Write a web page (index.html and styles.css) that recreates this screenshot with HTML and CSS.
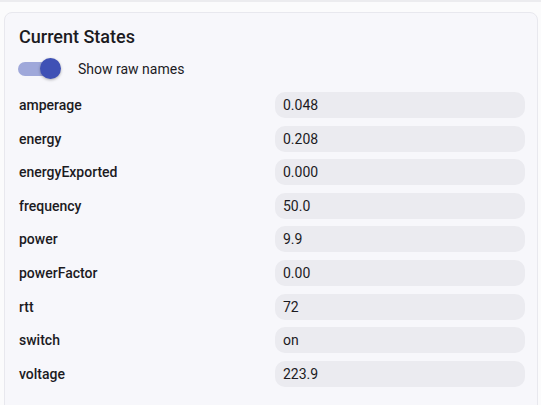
FILE: index.html
```html
<!DOCTYPE html>
<html>
<head>
<meta charset="utf-8">
<link rel="stylesheet" href="styles.css">
</head>
<body>
<div class="topline"></div>
<main class="page">
  <section class="card">
    <h2 class="title">Current States</h2>
    <label class="toggle-row">
      <span class="switch"><span class="track"></span><span class="thumb"></span></span>
      <span class="toggle-label">Show raw names</span>
    </label>
    <div class="states">
      <div class="name">amperage</div><div class="value">0.048</div>
      <div class="name">energy</div><div class="value">0.208</div>
      <div class="name">energyExported</div><div class="value">0.000</div>
      <div class="name">frequency</div><div class="value">50.0</div>
      <div class="name">power</div><div class="value">9.9</div>
      <div class="name">powerFactor</div><div class="value">0.00</div>
      <div class="name">rtt</div><div class="value">72</div>
      <div class="name">switch</div><div class="value">on</div>
      <div class="name">voltage</div><div class="value">223.9</div>
    </div>
  </section>
</main>
</body>
</html>
```

FILE: styles.css
```css
html, body {
  margin: 0;
  padding: 0;
}
body {
  background: #fbfbfc;
  font-family: Roboto, "Liberation Sans", sans-serif;
  color: #1c1b1f;
  height: 405px;
  overflow: hidden;
}
.topline {
  height: 2px;
  background: #ececef;
}
.page {
  padding: 10px 3px 0 4px;
}
.card {
  background: #f7f7fb;
  border: 1px solid #e8e8ee;
  border-radius: 8px;
  padding: 12px 12px 30px 14px;
}
.title {
  margin: 0;
  font-size: 18px;
  line-height: 24px;
  font-weight: 500;
  color: #1c1b1f;
}
.toggle-row {
  display: flex;
  align-items: center;
  height: 24px;
  margin-top: 8px;
  gap: 15px;
}
.switch {
  position: relative;
  width: 44px;
  height: 24px;
  display: block;
}
.track {
  position: absolute;
  left: -1px;
  top: 5px;
  width: 40px;
  height: 14px;
  border-radius: 7px;
  background: #9fa8da;
}
.thumb {
  position: absolute;
  left: 21px;
  top: 1px;
  width: 21px;
  height: 21px;
  border-radius: 50%;
  background: #3f51b5;
  box-shadow: 0 1px 3px rgba(0,0,0,0.3);
}
.toggle-label {
  font-size: 14px;
  color: #1c1b1f;
}
.states {
  display: grid;
  grid-template-columns: 256px 1fr;
  row-gap: 7.6px;
  margin-top: 11px;
  align-items: center;
}
.name {
  font-size: 14px;
  font-weight: 500;
  color: #1c1b1f;
}
.value {
  height: 26px;
  line-height: 26px;
  background: #ebebf0;
  border-radius: 10px;
  padding: 0 8px;
  font-size: 14px;
  color: #1c1b1f;
}
```
